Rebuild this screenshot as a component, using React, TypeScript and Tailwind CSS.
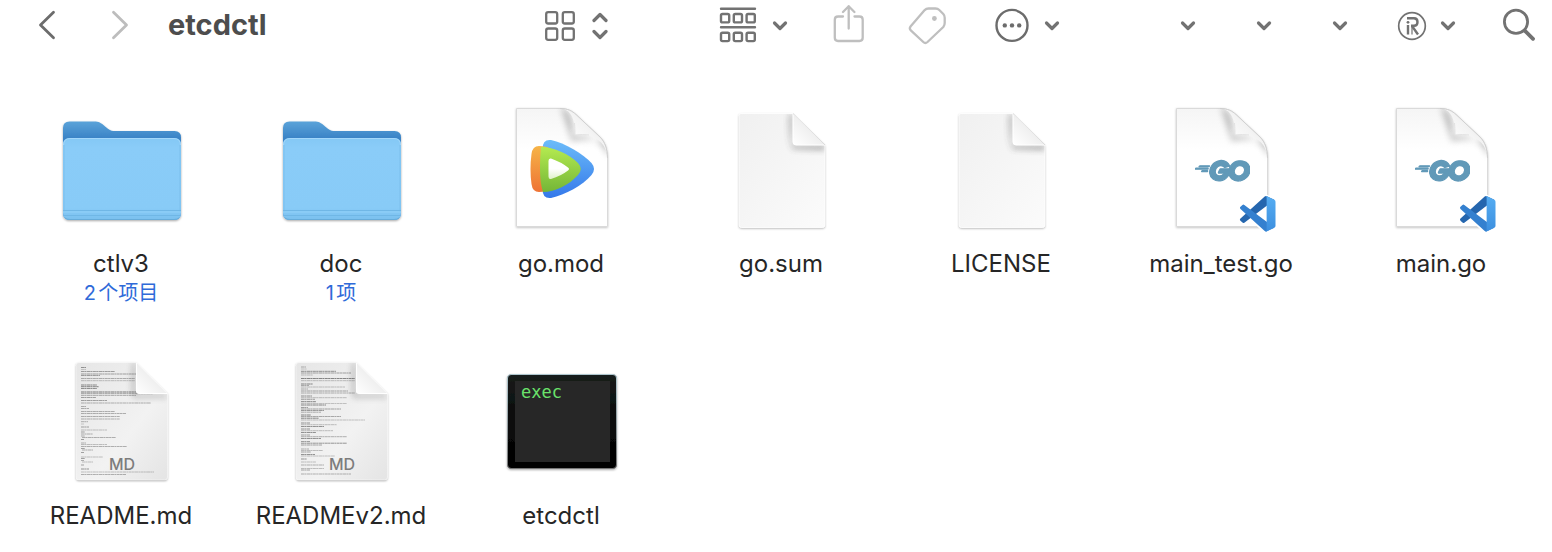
import React from 'react';
import { FaGolang } from 'react-icons/fa6';

const CHEVRON = 'M2.500 18 L8 23.500 L13.500 18';

function Chevron() {
  return (
    <svg width="16" height="40" viewBox="0 0 16 40" fill="none" stroke="#727272" strokeWidth="3.200" strokeLinecap="round" strokeLinejoin="round" aria-hidden="true">
      <path d={CHEVRON} />
    </svg>
  );
}

type ToolProps = { label: string; className?: string; children: React.ReactNode };

function Tool({ label, className = '', children }: ToolProps) {
  return (
    <button type="button" aria-label={label} className={`flex shrink-0 items-center ${className}`}>
      {children}
    </button>
  );
}

function Toolbar() {
  return (
    <header className="flex h-[50px] items-center pr-[17px] pl-[38px]">
      <Tool label="后退">
        <svg width="18" height="40" viewBox="38 5 18 40" fill="none" stroke="#6c6c6c" strokeWidth="2.800" strokeLinecap="round" strokeLinejoin="round">
          <path d="M53.500 12.200 L40.500 25 L53.500 37.800" />
        </svg>
      </Tool>
      <Tool label="前进" className="ml-[55px]">
        <svg width="18" height="40" viewBox="111 5 18 40" fill="none" stroke="#bdbdbd" strokeWidth="2.800" strokeLinecap="round" strokeLinejoin="round">
          <path d="M113.500 12.200 L126.500 25 L113.500 37.800" />
        </svg>
      </Tool>
      <h1 className="ml-[39px] min-w-0 flex-1 truncate text-[29px] leading-9 font-bold text-[#4d4d4d]">etcdctl</h1>

      <Tool label="显示方式" className="gap-[17px]">
        <svg width="30" height="40" viewBox="545 5 30 40" fill="none" stroke="#727272" strokeWidth="2.300">
          <rect x="546.200" y="12.200" width="11" height="11.300" rx="2" />
          <rect x="562.800" y="12.200" width="11" height="11.300" rx="2" />
          <rect x="546.200" y="28.500" width="11" height="11.300" rx="2" />
          <rect x="562.800" y="28.500" width="11" height="11.300" rx="2" />
        </svg>
        <svg width="16" height="40" viewBox="592 5 16 40" fill="none" stroke="#727272" strokeWidth="3.200" strokeLinecap="round" strokeLinejoin="round">
          <path d="M594 20.500 L600 14.500 L606 20.500 M594 31.500 L600 37.500 L606 31.500" />
        </svg>
      </Tool>

      <Tool label="分组" className="ml-[111px] gap-[15px]">
        <svg width="38" height="40" viewBox="719 5 38 40" fill="none" stroke="#727272" strokeWidth="2.400" strokeLinecap="round">
          <path d="M721 8.700 H755 M721 27.200 H755" />
          {[721, 733.8, 746.6].map((x) => (
            <g key={x}>
              <rect x={x} y="14" width="8.200" height="8.400" rx="1.500" />
              <rect x={x} y="32.700" width="8.200" height="8.400" rx="1.500" />
            </g>
          ))}
        </svg>
        <Chevron />
      </Tool>

      <Tool label="共享" className="ml-[45px]">
        <svg width="31" height="40" viewBox="833 5 31 40" fill="none" stroke="#bfbfbf" strokeWidth="2.300" strokeLinecap="round" strokeLinejoin="round">
          <path d="M843 16.500 H838 Q834.800 16.500 834.800 19.700 V37.800 Q834.800 41 838 41 H859.500 Q862.700 41 862.700 37.800 V19.700 Q862.700 16.500 859.500 16.500 H854.500 M848.700 28.500 V6.200 M843 12 L848.700 6.200 L854.400 12" />
        </svg>
      </Tool>

      <Tool label="标签" className="ml-[44px]">
        <svg width="38" height="40" viewBox="908 5 38 40" fill="none" stroke="#bfbfbf" strokeWidth="2.300" strokeLinejoin="round">
          <path d="M928.500 8.500 H935.500 Q937.800 8.500 939.300 10 L943.300 14 Q944.700 15.500 944.700 17.700 V23 Q944.700 25.200 943.300 27 L927.500 42 Q925.300 43.900 923.300 42 L910.800 30.300 Q908.900 28.500 910.700 26.200 L924.700 10.100 Q926.200 8.500 928.500 8.500 Z" />
          <circle cx="934.400" cy="18.500" r="2.400" fill="#bfbfbf" stroke="none" />
        </svg>
      </Tool>

      <Tool label="更多操作" className="ml-[49px] gap-[15px]">
        <svg width="34" height="40" viewBox="995 5 34 40" fill="none" stroke="#6c6c6c" strokeWidth="2.400">
          <circle cx="1012" cy="25.400" r="15.500" />
          <g fill="#6c6c6c" stroke="none">
            <circle cx="1004.800" cy="25.400" r="2.200" />
            <circle cx="1012" cy="25.400" r="2.200" />
            <circle cx="1019.200" cy="25.400" r="2.200" />
          </g>
        </svg>
        <Chevron />
      </Tool>

      <Tool label="工具一" className="ml-[120px]"><Chevron /></Tool>
      <Tool label="工具二" className="ml-[60px]"><Chevron /></Tool>
      <Tool label="工具三" className="ml-[60px]"><Chevron /></Tool>

      <Tool label="扩展" className="ml-[49px] gap-[13px]">
        <svg width="30" height="40" viewBox="1397 5 30 40" fill="none" stroke="#727272">
          <circle cx="1412" cy="26" r="13.300" strokeWidth="1.700" />
          <path d="M1407 18.300 H1414 Q1417.500 18.300 1417.500 22 Q1417.500 25.800 1414 25.800 H1411 M1412 26 L1418 34.500 M1408 25 V34.500" strokeWidth="2.400" />
          <path d="M1412 26 V34.500" strokeWidth="1.200" />
          <circle cx="1408" cy="22.300" r="1.400" fill="#727272" stroke="none" />
        </svg>
        <Chevron />
      </Tool>

      <Tool label="搜索" className="ml-[47px]">
        <svg width="32" height="40" viewBox="1503 5 32 40" fill="none" stroke="#727272" strokeLinecap="round">
          <circle cx="1516" cy="21.800" r="11.600" strokeWidth="2.800" />
          <path d="M1525 30.800 L1533 38.800" strokeWidth="3.800" />
        </svg>
      </Tool>
    </header>
  );
}

function Defs() {
  return (
    <svg width="0" height="0" className="absolute" aria-hidden="true">
      <defs>
        <linearGradient id="tab" x1="0" y1="0" x2="0" y2="1">
          <stop offset="0" stopColor="#5ba3d9" />
          <stop offset="0.170" stopColor="#3a83c6" />
          <stop offset="1" stopColor="#3a83c6" />
        </linearGradient>
        <linearGradient id="front" x1="0" y1="0" x2="0" y2="1">
          <stop offset="0" stopColor="#84c8f5" />
          <stop offset="0.120" stopColor="#8accf8" />
          <stop offset="0.850" stopColor="#88cbf7" />
          <stop offset="1" stopColor="#7ac0ee" />
        </linearGradient>
        <linearGradient id="paper" x1="0" y1="0" x2="1" y2="1">
          <stop offset="0" stopColor="#f0f0f0" />
          <stop offset="1" stopColor="#fbfbfb" />
        </linearGradient>
        <linearGradient id="sheet" x1="0" y1="0" x2="0" y2="1">
          <stop offset="0" stopColor="#f5f5f5" />
          <stop offset="0.350" stopColor="#ffffff" />
        </linearGradient>
        <linearGradient id="md" x1="0" y1="0" x2="1" y2="1">
          <stop offset="0" stopColor="#e6e6e6" />
          <stop offset="0.600" stopColor="#f2f2f2" />
          <stop offset="1" stopColor="#e4e4e4" />
        </linearGradient>
        <linearGradient id="fold" x1="0" y1="1" x2="0.600" y2="0.400">
          <stop offset="0" stopColor="#ffffff" />
          <stop offset="1" stopColor="#ececec" />
        </linearGradient>
        <linearGradient id="curl" x1="0.200" y1="0.800" x2="0.600" y2="0.400">
          <stop offset="0" stopColor="#ffffff" />
          <stop offset="1" stopColor="#f1f1f1" />
        </linearGradient>
        <linearGradient id="orange" x1="0" y1="0" x2="0" y2="1">
          <stop offset="0" stopColor="#f6b447" />
          <stop offset="1" stopColor="#ee7335" />
        </linearGradient>
        <linearGradient id="blue" x1="0" y1="0" x2="0" y2="1">
          <stop offset="0" stopColor="#6cbcf9" />
          <stop offset="1" stopColor="#3478ea" />
        </linearGradient>
        <linearGradient id="green" x1="0" y1="0" x2="0" y2="1">
          <stop offset="0" stopColor="#b4ea50" />
          <stop offset="1" stopColor="#74b637" />
        </linearGradient>
        <linearGradient id="play" x1="0" y1="0" x2="0" y2="1">
          <stop offset="0.500" stopColor="#ffffff" />
          <stop offset="1" stopColor="#dff1c8" />
        </linearGradient>
        <linearGradient id="bezel" x1="0" y1="0" x2="0" y2="1">
          <stop offset="0" stopColor="#161c1b" />
          <stop offset="0.500" stopColor="#0b0b0b" />
          <stop offset="1" stopColor="#000000" />
        </linearGradient>
        <linearGradient id="rim" x1="0" y1="0" x2="0" y2="1">
          <stop offset="0" stopColor="#aec6ce" />
          <stop offset="1" stopColor="#777777" />
        </linearGradient>
        <linearGradient id="vs" x1="0" y1="0" x2="0" y2="1">
          <stop offset="0" stopColor="#55adf2" />
          <stop offset="1" stopColor="#3d8fdf" />
        </linearGradient>
        <filter id="drop" x="-20%" y="-20%" width="140%" height="140%">
          <feDropShadow dx="0" dy="1" stdDeviation="1" floodColor="#000" floodOpacity="0.340" />
        </filter>
        <filter id="faint" x="-20%" y="-20%" width="140%" height="140%">
          <feDropShadow dx="0" dy="0.800" stdDeviation="0.800" floodColor="#000" floodOpacity="0.250" />
        </filter>
        <filter id="soft" x="-60%" y="-60%" width="220%" height="220%">
          <feGaussianBlur stdDeviation="3" />
        </filter>
        <clipPath id="sheetClip"><path d={SHEET} /></clipPath>
        <clipPath id="plainClip"><path d={PLAIN} /></clipPath>
        <clipPath id="mdClip"><path d={MD_PAGE} /></clipPath>
      </defs>
    </svg>
  );
}

const SHEET = 'M19.500 1.500 H63 C71 1.500 75 4 79 7.500 L103 30 C108 35 110.500 42 110.500 51 V119.500 H19.500 Z';
const PLAIN = 'M24 6.500 H75.500 L108 38 V118 Q108 120.500 105.500 120.500 H24.500 Q22 120.500 22 118 V8.500 Q22 6.500 24 6.500 Z';
const MD_PAGE = 'M22 3.500 H79 L110.500 34.500 V118 Q110.500 121 107.500 121 H22 Q19 121 19 118 V6.500 Q19 3.500 22 3.500 Z';

function Art({ children }: { children: React.ReactNode }) {
  return <svg className="size-32 overflow-visible" viewBox="0 0 128 128" aria-hidden="true">{children}</svg>;
}

function FolderIcon() {
  return (
    <Art>
      <g filter="url(#drop)">
        <path d="M6 106 V21 Q6 14.500 12.500 14.500 H37 C42 14.500 44 16 47 18.500 C51 22 53 24 58 24 H117.500 Q124 24 124 30.500 V106 Q124 113 117 113 H13 Q6 113 6 106 Z" fill="url(#tab)" />
        <path d="M6 38 Q6 31 13 31 H117 Q124 31 124 38 V106 Q124 113 117 113 H13 Q6 113 6 106 Z" fill="url(#front)" />
      </g>
      <path d="M6.500 38 Q6.500 31.500 13 31.500 H117 Q123.500 31.500 123.500 38" fill="none" stroke="#a2d7fa" />
      <path d="M7 38 V105 M123 38 V105" stroke="#76bbe9" opacity="0.700" />
      <path d="M6 103.500 H124 M6.500 108.500 H123.500" stroke="#70b7e6" />
      <path d="M6 105 H124" stroke="#91d0f8" />
      <path d="M8 111 Q10 112.500 13 112.500 H117 Q120 112.500 122 111" fill="none" stroke="#67acda" />
    </Art>
  );
}

function Sheet({ children }: { children: React.ReactNode }) {
  return (
    <Art>
      <path d={SHEET} fill="url(#sheet)" stroke="#dadada" filter="url(#faint)" />
      <g clipPath="url(#sheetClip)">
        <path d="M64 0 C74 4 76 15 76 30 C92 27 106 33 111 50 L112 36 C104 32 88 31 75 34 Z" fill="#808080" opacity="0.550" filter="url(#soft)" />
        <path d="M65 1.500 C75 4 78 13 78 28 C94 26 107 32 110.500 48 L112 0 Z" fill="url(#curl)" />
        <path d="M77.500 16 Q78 21 78 28 Q86 27 92 28" fill="none" stroke="#e2e2e2" />
      </g>
      <path d="M63 1.500 C71 1.500 75 4 79 7.500 L103 30 C108 35 110.500 42 110.500 51" fill="none" stroke="#cfcfcf" />
      {children}
    </Art>
  );
}

function VideoIcon() {
  return (
    <Sheet>
      <path d="M45.500 42 Q45.500 32 54 33 C68 36 86 47 94.500 56 Q99.500 62 94.500 68 C86 78 68 88 54 91 Q45.500 92 45.500 82 Z" fill="url(#blue)" />
      <path d="M34.500 47 Q35.500 39 42 39 Q49 39 54 42 V81 Q49 85 42 85 Q35.500 85 34.500 77 Q32.500 62 34.500 47 Z" fill="url(#orange)" />
      <path d="M44 40 C57 40 72 47 81 56 Q86.500 62 81 68 C72 78 58 85 46 85 Q43 76 43 62 Q43 49 44 40 Z" fill="url(#green)" />
      <path d="M51.500 54 Q51.500 51 54 51.500 Q64 55 71 60.500 Q73 62 71 63.500 Q64 69 54 72 Q51.500 72.500 51.500 69.500 Z" fill="url(#play)" />
    </Sheet>
  );
}

const VS_OUTLINE = 'M70.9 99.3a6.2 6.2 0 0 0 5-.2l20.5-9.9a6.2 6.2 0 0 0 3.6-5.6V16.4a6.2 6.2 0 0 0-3.5-5.6L75.9.9a6.2 6.2 0 0 0-7.1 1.2L29.4 38.1 12.2 25.1a4.2 4.2 0 0 0-5.3.2L1.4 30.3a4.2 4.2 0 0 0 0 6.2L16.3 50 1.4 63.6a4.2 4.2 0 0 0 0 6.2l5.5 5a4.2 4.2 0 0 0 5.3.2l17.2-13 39.4 36a6.2 6.2 0 0 0 2.1 1.3Z';
const VS_ARM = 'M96.500 10.800 75.900 .9a6.200 6.200 0 0 0-7.100 1.200L1.400 63.600a4.200 4.200 0 0 0 0 6.200l5.500 5a4.200 4.200 0 0 0 5.300 .2L93.400 13.400Z';

function GoIcon() {
  return (
    <Sheet>
      <FaGolang x={38} y={37} size={55} color="#6199b8" strokeWidth={14} />
      <g transform="translate(83 89) scale(0.355)">
        <path d={VS_OUTLINE} fill="#fff" stroke="#fff" strokeWidth="9" strokeLinejoin="round" />
        <path d={VS_ARM} fill="#2566ae" />
        <path d={VS_ARM} fill="#3480cf" transform="matrix(1 0 0 -1 0 100)" />
        <path d="M75.900 99.100a6.200 6.200 0 0 1-7.100-1.200c2.300 2.300 6.200 .7 6.200-2.600V4.700c0-3.300-3.900-4.900-6.200-2.600a6.200 6.200 0 0 1 7.100-1.200l20.600 9.900A6.200 6.200 0 0 1 100 16.400v67.200a6.200 6.200 0 0 1-3.500 5.600Z" fill="url(#vs)" />
      </g>
    </Sheet>
  );
}

function PlainIcon() {
  return (
    <Art>
      <path d={PLAIN} fill="url(#paper)" filter="url(#drop)" />
      <g clipPath="url(#plainClip)">
        <path d="M75 7 V39 H108 V42 L76 41 Q73 40 73 7 Z" fill="#444" opacity="0.750" filter="url(#soft)" />
        <path d="M76 6.500 V35 Q76 38 79 38 H108 Z" fill="url(#fold)" />
        <path d="M76 6.500 V35 Q76 38 79 38 H108" fill="none" stroke="#fff" />
      </g>
      <path d={PLAIN} fill="none" stroke="#fff" opacity="0.800" />
      <path d="M76 6.500 L108 38" stroke="#dcdcdc" />
    </Art>
  );
}

// Each thumbnail line is [top, left, width, opacity].
type Line = [number, number, number, number];

const README_LINES: Line[] = [
  [8.5, 24, 5, 0.7], [10.5, 24, 5, 0.3], [12.5, 24, 34, 0.6], [15, 24, 55, 0.6], [16.5, 24, 19, 0.6],
  [19.5, 24, 54, 0.5], [21.7, 24, 54, 0.4], [26, 24, 16, 0.8], [27.7, 24, 18, 0.8], [29.4, 24, 16, 0.8],
  [33, 24, 57, 0.9], [34.7, 24, 72, 0.6], [36.4, 24, 55, 0.5], [38.5, 24, 15, 0.6], [41.5, 24, 26, 0.6],
  [44, 24, 70, 0.5], [47.5, 24, 5, 0.5], [49.5, 24, 8, 0.5], [52.5, 24, 34, 0.5], [54.5, 24, 45, 0.5],
  [57.5, 24, 39, 0.5], [60, 24, 39, 0.5], [62.7, 24, 7, 0.5], [65, 24, 3, 0.3], [68, 24, 8, 0.6],
  [71, 24, 26, 0.4], [73, 24, 4, 0.6], [75, 24, 12, 0.5], [77, 24, 4, 0.5], [78.5, 25, 34, 0.5], [80.5, 24, 3, 0.6],
  [84, 24, 5, 0.5], [85.5, 24, 26, 0.4], [87.5, 24, 46, 0.5], [89.5, 24, 4, 0.6], [91, 25, 11, 0.5], [93.5, 24, 3, 0.6],
  [98, 24, 22, 0.4], [99.5, 24, 4, 0.6], [101.500, 24, 3, 0.5], [103, 25, 11, 0.4], [106, 24, 3, 0.6],
  [110, 24, 8, 0.7], [113, 24, 73, 0.4], [115.5, 24, 45, 0.5],
];

const README_V2_LINES: Line[] = [
  [8, 24, 5, 0.5], [10, 24, 6, 0.3], [12.3, 24, 35, 0.7], [14, 24, 50, 0.6], [16, 24, 12, 0.4],
  [19.5, 24, 54, 0.8], [21.7, 24, 54, 0.4], [25, 24, 12, 0.8], [26.5, 24, 8, 0.5], [28, 24, 44, 0.4],
  [30, 24, 7, 0.5], [32, 24, 47, 0.6], [34, 24, 54, 0.5], [37, 24, 11, 0.7], [38.7, 24, 46, 0.4], [40.3, 24, 14, 0.6],
  [42.7, 24, 15, 0.8], [44.4, 24, 46, 0.4], [46, 24, 25, 0.8], [48.5, 24, 7, 0.6], [50, 24, 40, 0.6], [51.600, 24, 23, 0.7], [53.2, 24, 20, 0.5],
  [56, 24, 10, 0.8], [57.6, 24, 40, 0.6], [59.2, 24, 18, 0.8], [61, 24, 64, 0.4], [64, 24, 9, 0.7], [65.7, 24, 36, 0.4], [67.4, 24, 23, 0.8],
  [70, 24, 9, 0.7], [71.7, 24, 32, 0.4], [73.4, 24, 15, 0.8], [76, 24, 9, 0.6], [77.7, 24, 46, 0.5], [79.4, 24, 20, 0.8],
  [82.5, 24, 9, 0.6], [84.2, 24, 46, 0.7], [86, 24, 21, 0.6], [90, 24, 8, 0.5], [91.500, 24, 22, 0.4], [93, 24, 10, 0.6],
  [95.5, 24, 14, 0.7], [97, 24, 34, 0.4], [100, 24, 6, 0.7], [103, 24, 15, 0.4], [106, 24, 23, 0.5], [109.500, 24, 23, 0.4], [111, 24, 9, 0.6], [115, 24, 50, 0.5],
];

function MarkdownIcon({ lines }: { lines: Line[] }) {
  return (
    <Art>
      <path d={MD_PAGE} fill="url(#md)" filter="url(#drop)" />
      <g stroke="#333" strokeWidth="0.700">
        {lines.map(([y, x, w, o], i) => (
          <path key={i} d={`M${x} ${y} h${w}`} opacity={o} strokeDasharray="3 0.300 2 0.400 4 0.300 1.500 0.400" />
        ))}
      </g>
      <g clipPath="url(#mdClip)">
        <path d="M78 4 V36 H110 V38 L77 38 Q75 38 76 4 Z" fill="#444" opacity="0.550" filter="url(#soft)" />
        <path d="M79 3.500 V32 Q79 34.500 82 34.500 H110.500 Z" fill="url(#fold)" />
        <path d="M79.500 3.500 V32 Q79.500 34.500 82 34.500 H110.500" fill="none" stroke="#fff" />
      </g>
      <path d={MD_PAGE} fill="none" stroke="#fff" opacity="0.450" />
      <text x="65" y="111" textAnchor="middle" fontSize="16" fontWeight="500" fill="#7c7c7c">MD</text>
    </Art>
  );
}

function ExecIcon() {
  return (
    <Art>
      <rect x="10.500" y="15.500" width="109" height="94" rx="3.500" fill="url(#bezel)" stroke="url(#rim)" filter="url(#drop)" />
      <rect x="18" y="22" width="95" height="81" fill="#272727" />
      <text x="24" y="39" fontSize="17" fill="#6ae26b" fontFamily="'DejaVu Sans Mono', monospace">exec</text>
    </Art>
  );
}

type Item = { name: string; icon: React.ReactNode; detail?: string };

const items: Item[] = [
  { name: 'ctlv3', icon: <FolderIcon />, detail: '2个项目' },
  { name: 'doc', icon: <FolderIcon />, detail: '1项' },
  { name: 'go.mod', icon: <VideoIcon /> },
  { name: 'go.sum', icon: <PlainIcon /> },
  { name: 'LICENSE', icon: <PlainIcon /> },
  { name: 'main_test.go', icon: <GoIcon /> },
  { name: 'main.go', icon: <GoIcon /> },
  { name: 'README.md', icon: <MarkdownIcon lines={README_LINES} /> },
  { name: 'READMEv2.md', icon: <MarkdownIcon lines={README_V2_LINES} /> },
  { name: 'etcdctl', icon: <ExecIcon /> },
];

export default function App() {
  return (
    <div className="min-h-screen bg-white font-['Inter','Noto_Sans_CJK_SC',sans-serif]">
      <Defs />
      <Toolbar />
      <main className="pt-[57px] pl-[11px]">
        <ul className="grid grid-cols-[repeat(auto-fill,220px)] gap-y-12">
          {items.map((item) => (
            <li key={item.name} className="flex h-[204px] flex-col items-center">
              {item.icon}
              <span className="mt-[15px] text-[24px] leading-7 text-[#262626]">{item.name}</span>
              {item.detail && <span lang="zh-CN" className="mt-[2px] text-[20px] leading-[26px] text-[#2f6ad9] [text-autospace:normal]">{item.detail}</span>}
            </li>
          ))}
        </ul>
      </main>
    </div>
  );
}
